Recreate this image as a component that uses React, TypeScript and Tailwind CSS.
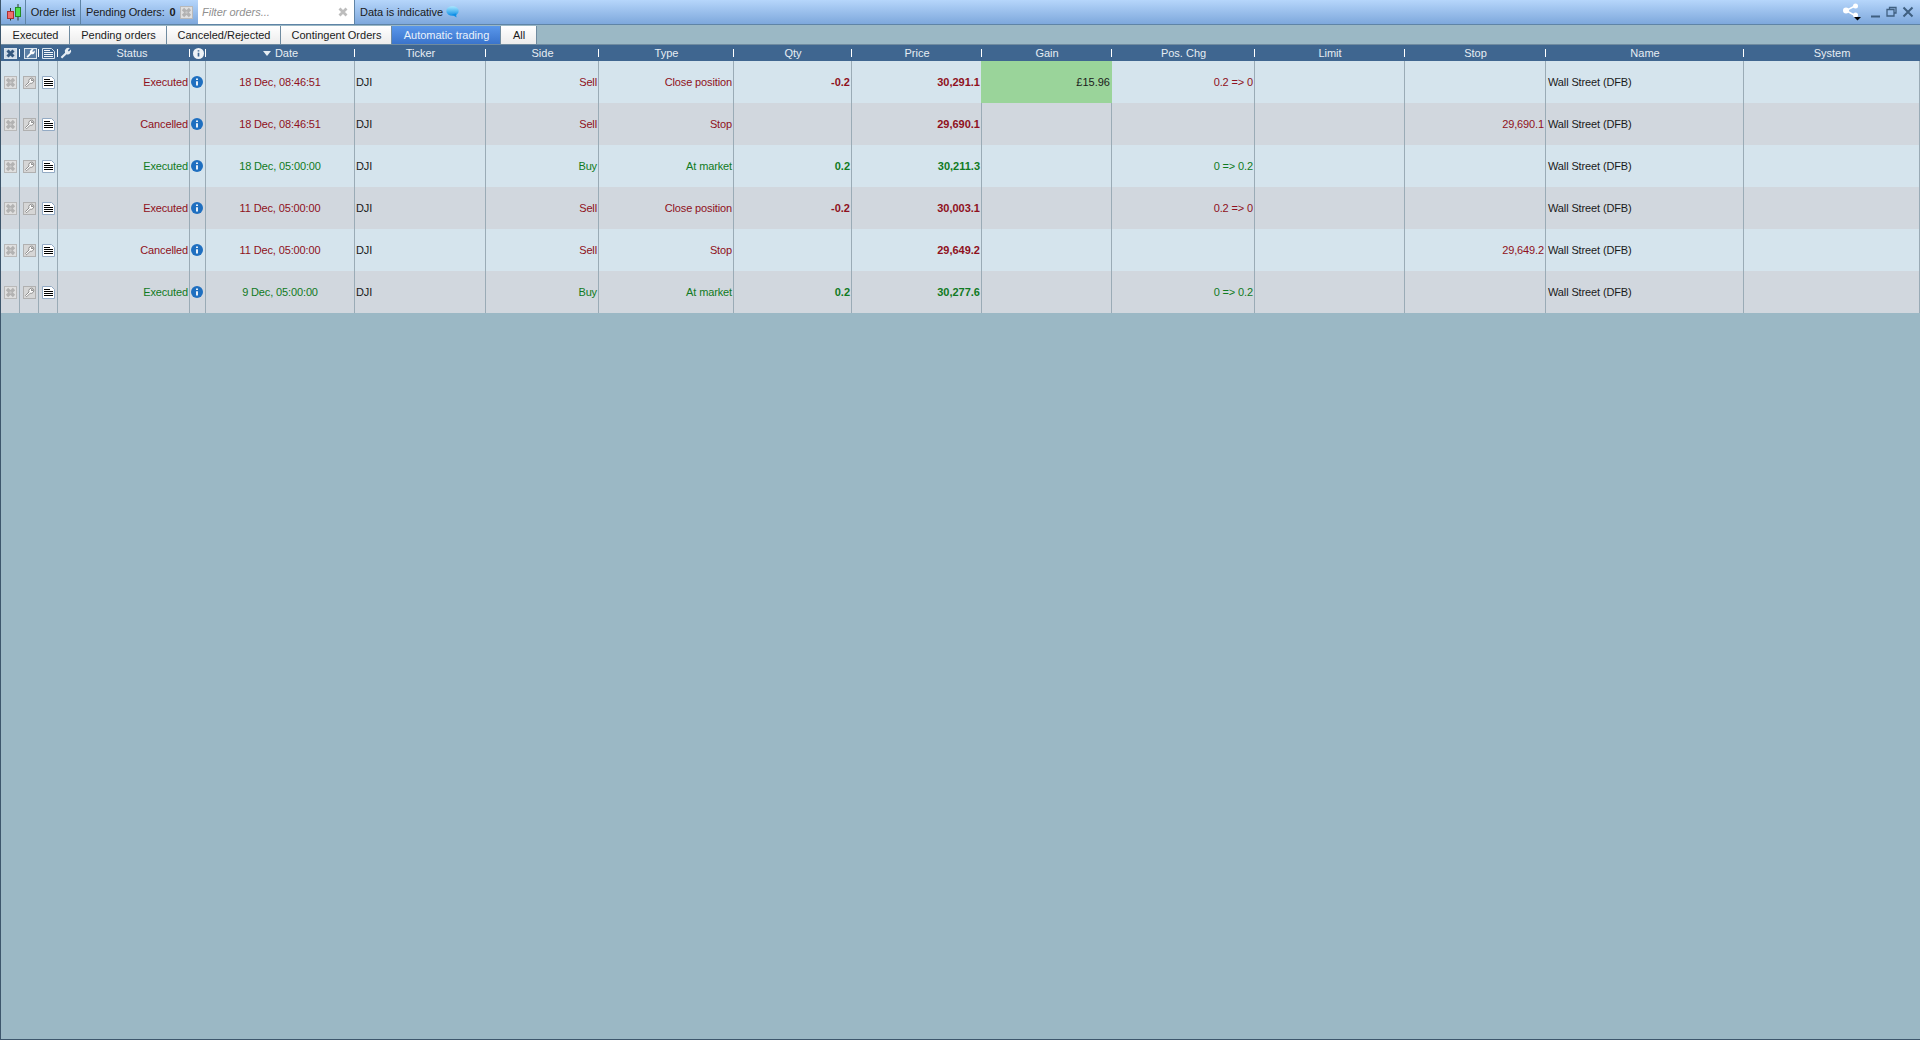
const grid =
  'grid grid-cols-[19px_19px_19px_132px_16px_149px_131px_113px_135px_118px_130px_130px_143px_150px_141px_198px_1fr]';

const RED = 'text-[#8f1020]';
const GREEN = 'text-[#107a22]';

type Row = {
  status: string;
  date: string;
  side: string;
  type: string;
  qty?: string;
  price: string;
  gain?: string;
  chg?: string;
  stop?: string;
  win: boolean;
};

const rows: Row[] = [
  { status: 'Executed', date: '18 Dec, 08:46:51', side: 'Sell', type: 'Close position', qty: '-0.2', price: '30,291.1', gain: '£15.96', chg: '0.2 => 0', win: false },
  { status: 'Cancelled', date: '18 Dec, 08:46:51', side: 'Sell', type: 'Stop', price: '29,690.1', stop: '29,690.1', win: false },
  { status: 'Executed', date: '18 Dec, 05:00:00', side: 'Buy', type: 'At market', qty: '0.2', price: '30,211.3', chg: '0 => 0.2', win: true },
  { status: 'Executed', date: '11 Dec, 05:00:00', side: 'Sell', type: 'Close position', qty: '-0.2', price: '30,003.1', chg: '0.2 => 0', win: false },
  { status: 'Cancelled', date: '11 Dec, 05:00:00', side: 'Sell', type: 'Stop', price: '29,649.2', stop: '29,649.2', win: false },
  { status: 'Executed', date: '9 Dec, 05:00:00', side: 'Buy', type: 'At market', qty: '0.2', price: '30,277.6', chg: '0 => 0.2', win: true },
];

const tabs = [
  { label: 'Executed', w: 'w-[69px]' },
  { label: 'Pending orders', w: 'w-[97px]' },
  { label: 'Canceled/Rejected', w: 'w-[114px]' },
  { label: 'Contingent Orders', w: 'w-[111px]' },
  { label: 'Automatic trading', w: 'w-[109px]', active: true },
  { label: 'All', w: 'w-[36px]' },
];

const WRENCH = 'M2.500 9.500L6 6A2.800 2.800 0 0 1 9.800 2.400L8.200 4l.8 1 1.600-1.600A2.800 2.800 0 0 1 7.200 7.200L3.700 10.700z';

const CandleLogo = () => (
  <svg width="16" height="17" viewBox="0 0 16 17">
    <path d="M4.500 4v12.500M12 0v16.500" stroke="#2b3a2b" strokeWidth="1" />
    <rect x="1.500" y="7.500" width="6" height="7" fill="#f26d6d" stroke="#a83232" />
    <rect x="9.500" y="3.500" width="5" height="9" fill="#4fe04f" stroke="#238a23" />
  </svg>
);

const CloseBox = () => (
  <svg width="13" height="13" viewBox="0 0 13 13">
    <rect x="0.500" y="0.500" width="12" height="12" fill="#dfdfdf" stroke="#b9b9b9" />
    <path d="M3 3l7 7M10 3l-7 7" stroke="#b2b2b2" strokeWidth="3.200" />
    <circle cx="6.500" cy="6.500" r="1.200" fill="#c8c8c8" />
  </svg>
);

const WrenchBox = () => (
  <svg width="13" height="13" viewBox="0 0 13 13">
    <rect x="0.500" y="0.500" width="12" height="12" fill="#d6d6d6" stroke="#b0b0b0" />
    <path d={WRENCH} fill="#fff" stroke="#8e8e8e" strokeWidth="1" />
  </svg>
);

const DocIcon = () => (
  <svg width="13" height="13" viewBox="0 0 13 13">
    <path d="M0.500 0.500h9l3 3v9h-12z" fill="#fff" stroke="#93aac4" />
    <path d="M2 3.500h6M2 5.500h9M2 7.500h9M2 9.500h9" stroke="#000" strokeWidth="1" />
  </svg>
);

const HeadClose = () => (
  <svg width="13" height="11" viewBox="0 0 13 11">
    <rect x="0.500" y="0.500" width="12" height="10" fill="#cfdbe7" stroke="#dbe5ee" />
    <path d="M3.500 2.500l6 6M9.500 2.500l-6 6" stroke="#35587e" strokeWidth="3" />
  </svg>
);

const HeadWrench = () => (
  <svg width="13" height="11" viewBox="0 1 13 11">
    <rect x="0.500" y="1.500" width="12" height="10" fill="#5b7fa5" stroke="#dbe5ee" />
    <path d={WRENCH} fill="#fff" />
  </svg>
);

const HeadDoc = () => (
  <svg width="13" height="11" viewBox="0 0 13 11">
    <path d="M0.500 0.500h9l3 3v7h-12z" fill="#3f6690" stroke="#dbe5ee" />
    <path d="M2 2.500h6M2 4.500h9M2 6.500h9M2 8.500h9" stroke="#f4f7fa" strokeWidth="1" />
  </svg>
);

const Wrench = () => (
  <svg width="12" height="12" viewBox="2 1.500 9.500 9.500">
    <path d={WRENCH} fill="#e6edf3" />
  </svg>
);

const InfoDot = ({ head }: { head?: boolean }) => (
  <svg width={head ? 11 : 12} height={head ? 11 : 12} viewBox="0 0 12 12">
    <circle cx="6" cy="6" r="6" fill={head ? '#eef3f7' : '#1f6fc0'} />
    <path d="M6 2.400v1.500M6 5.200v4.200" stroke={head ? '#3f6690' : '#fff'} strokeWidth="1.800" />
  </svg>
);

const Bubble = () => (
  <svg width="13" height="12" viewBox="0 0 13 12">
    <defs>
      <linearGradient id="bub" x1="0" y1="0" x2="0" y2="1">
        <stop offset="0" stopColor="#a8e8ff" />
        <stop offset="1" stopColor="#0f8fe6" />
      </linearGradient>
    </defs>
    <ellipse cx="6.500" cy="5" rx="6.200" ry="4.800" fill="url(#bub)" />
    <path d="M6 8.500l4.500 3-.5-4z" fill="#0f8fe6" />
  </svg>
);

const ShareIcon = () => (
  <svg width="20" height="18" viewBox="0 0 20 18">
    <path d="M12 3L3 7.500l8 4.500" fill="none" stroke="#fff" strokeWidth="1.500" />
    <circle cx="12.500" cy="3" r="2.500" fill="#fff" />
    <circle cx="3" cy="7.500" r="3" fill="#fff" />
    <circle cx="12.500" cy="12" r="2.500" fill="#fff" />
    <path d="M11 14h7l-3.500 3.500z" fill="#000" />
  </svg>
);

const WindowControls = () => (
  <div className="flex items-center gap-[5px] text-[#3f5f80]">
    <svg width="11" height="12" viewBox="0 0 11 12">
      <path d="M1 10.500h9" stroke="currentColor" strokeWidth="2" />
    </svg>
    <svg width="11" height="12" viewBox="0 0 11 12">
      <path d="M3.500 3V1.500h6.500V7H8M1 3.500h7v6.500H1z" fill="none" stroke="currentColor" strokeWidth="1.300" />
    </svg>
    <svg width="12" height="12" viewBox="0 0 12 12">
      <path d="M1.500 1.500l9 9M10.500 1.500l-9 9" stroke="currentColor" strokeWidth="2" />
    </svg>
  </div>
);

const Tick = () => <span className="absolute right-0 top-[4px] h-[8px] w-px bg-white" />;

// little white tick at the right end of a header cell
const HeadCell = ({ label, tick = true }: { label?: string; tick?: boolean }) => (
  <div className="relative flex items-center justify-center pb-px">
    {label}
    {tick && <Tick />}
  </div>
);

const Cell = ({ children, className = '' }: { children?: React.ReactNode; className?: string }) => (
  <div className={`flex items-center border-r border-[#9aabb6] ${className}`}>{children}</div>
);

export default function App() {
  return (
    <div
      className="flex h-[1040px] w-full flex-col overflow-hidden border-b border-l border-[#3d566c] bg-[#9bb8c5] text-[11px] text-[#1a1a1a]"
      style={{ fontFamily: '"Liberation Sans", Arial, sans-serif' }}
    >
      {/* Top bar */}
      <div className="flex h-[25px] shrink-0 border-b border-[#5f84a6] bg-gradient-to-b from-[#b6d6fb] to-[#7ea8dc]">
        <div className="flex w-[25px] items-center justify-center border-r border-[#5f84a6] pl-px pt-px">
          <CandleLogo />
        </div>
        <div className="flex w-[55px] items-center justify-center border-r border-[#5f84a6]">Order list</div>
        <div className="flex w-[117px] items-center pl-[5px]">
          <span className="tracking-[-0.1px]">Pending Orders:</span>
          <b className="ml-[5px] mr-[4px]">0</b>
          <CloseBox />
        </div>
        <div className="flex w-[157px] items-center justify-between border-r border-[#5f84a6] bg-white pl-[4px] pr-[6px]">
          <span className="italic text-[#8f8f8f]">Filter orders...</span>
          <svg width="10" height="10" viewBox="0 0 10 10">
            <path d="M1.500 1.500l7 7M8.500 1.500l-7 7" stroke="#bdbdbd" strokeWidth="2.800" />
          </svg>
        </div>
        <div className="flex items-center gap-[3px] pl-[5px]">
          Data is indicative
          <Bubble />
        </div>
        <div className="ml-auto flex items-center gap-[7px] pr-[6px]">
          <ShareIcon />
          <WindowControls />
        </div>
      </div>

      {/* Tabs */}
      <div className="flex h-[20px] shrink-0 border-b border-[#6f8ba0] pt-px">
        {tabs.map((t) => (
          <div
            key={t.label}
            className={`flex h-[18px] items-center justify-center border-r border-[#6f8ba0] pl-px ${t.w} ${
              t.active
                ? 'bg-gradient-to-b from-[#5a97ea] to-[#3a74cc] text-[#eaf2fb]'
                : 'bg-gradient-to-b from-white to-[#ececec]'
            }`}
          >
            {t.label}
          </div>
        ))}
      </div>

      {/* Header */}
      <div className={`${grid} h-[16px] shrink-0 bg-[#3f6690] text-[#e6edf3]`}>
        <div className="relative flex items-center justify-center pb-px">
          <HeadClose />
          <Tick />
        </div>
        <div className="relative flex items-center justify-center pb-px pl-px">
          <HeadWrench />
          <Tick />
        </div>
        <div className="relative flex items-center justify-center pb-px">
          <HeadDoc />
          <Tick />
        </div>
        <div className="relative flex items-center pb-px pl-[2px]">
          <Wrench />
          <span className="flex-1 pl-[2px] text-center">Status</span>
          <Tick />
        </div>
        <div className="relative flex items-center justify-center pb-px">
          <InfoDot head />
          <Tick />
        </div>
        <div className="relative flex items-center justify-center gap-[4px] pb-px">
          <svg width="8" height="5" viewBox="0 0 8 5">
            <path d="M0 0h8L4 5z" fill="#e6edf3" />
          </svg>
          Date
          <Tick />
        </div>
        {['Ticker', 'Side', 'Type', 'Qty', 'Price', 'Gain', 'Pos. Chg', 'Limit', 'Stop', 'Name'].map((h) => (
          <HeadCell key={h} label={h} />
        ))}
        <HeadCell label="System" tick={false} />
      </div>

      {/* Rows */}
      {rows.map((r, i) => {
        const tone = r.win ? GREEN : RED;
        const hasGain = !!r.gain;
        return (
          <div
            key={i}
            className={`${grid} h-[42px] shrink-0 tracking-[-0.13px] ${i % 2 ? 'bg-[#d1d7de]' : 'bg-[#d5e4ed]'}`}
          >
            <Cell className="justify-center pl-px">
              <CloseBox />
            </Cell>
            <Cell className="justify-center pl-px">
              <WrenchBox />
            </Cell>
            <Cell className="justify-center pl-px">
              <DocIcon />
            </Cell>
            <Cell className={`justify-end pr-px ${tone}`}>{r.status}</Cell>
            <Cell className="justify-center pr-px">
              <InfoDot />
            </Cell>
            <Cell className={`justify-center ${tone}`}>{r.date}</Cell>
            <Cell className="pl-px">DJI</Cell>
            <Cell className={`justify-end pr-px ${tone}`}>{r.side}</Cell>
            <Cell className={`justify-end pr-px ${tone}`}>{r.type}</Cell>
            <Cell className={`justify-end pr-px font-bold tracking-normal ${tone}`}>{r.qty}</Cell>
            <Cell className={`justify-end pr-px font-bold tracking-normal ${tone} ${hasGain ? 'border-[#9ad49a]' : ''}`}>
              {r.price}
            </Cell>
            <Cell className={`justify-end pr-px tracking-normal ${hasGain ? 'border-[#9ad49a] bg-[#9ad49a]' : ''}`}>
              {r.gain}
            </Cell>
            <Cell className={`justify-end pr-px ${tone}`}>{r.chg}</Cell>
            <Cell />
            <Cell className={`justify-end pr-px ${tone}`}>{r.stop}</Cell>
            <Cell className="pl-[2px]">Wall Street (DFB)</Cell>
            <Cell />
          </div>
        );
      })}
    </div>
  );
}
